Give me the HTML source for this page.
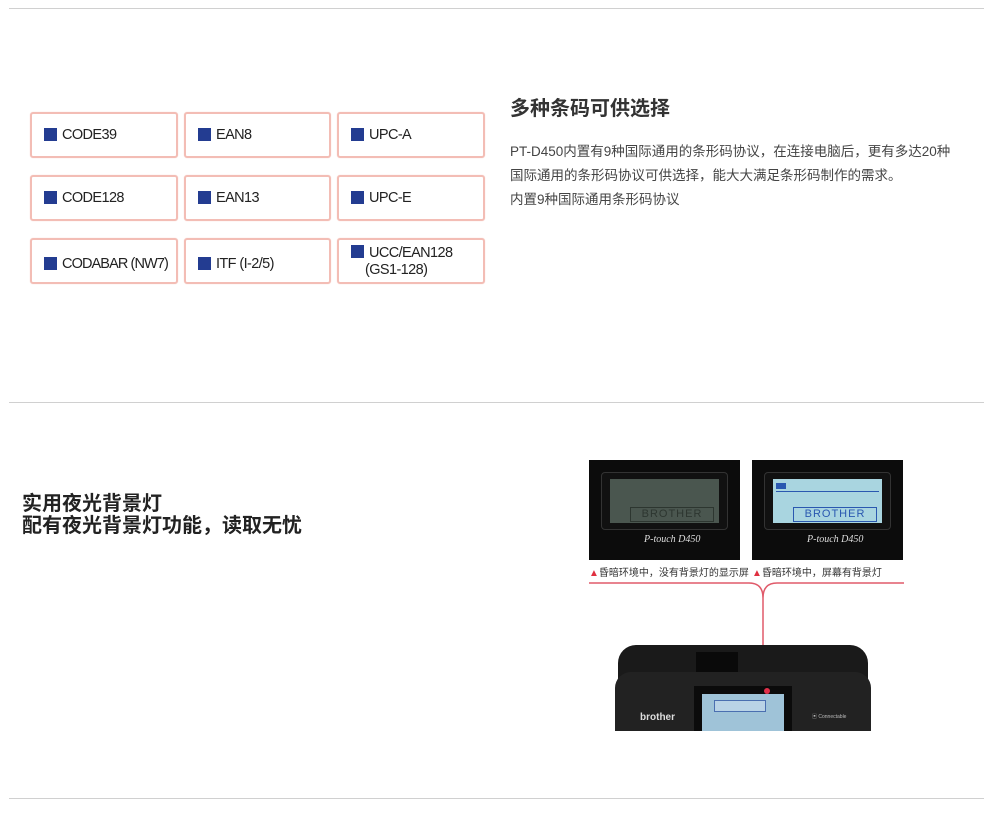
<!DOCTYPE html>
<html><head><meta charset="utf-8"><style>
body{margin:0;width:997px;height:837px;background:#fff;position:relative;font-family:"Liberation Sans","Noto Sans CJK SC",sans-serif;overflow:hidden}
.hr{position:absolute;left:9px;width:975px;height:1px;background:#d0d0d0}
.b{position:absolute;border:2px solid #f3bdb5;border-radius:3px;box-sizing:border-box;font-size:14.5px;color:#222;box-shadow:0 0 1px #f7d0ca}
.b i{position:absolute;left:12px;top:14px;width:13px;height:13px;background:#233c91}
.b span{position:absolute;left:30px;top:13px;letter-spacing:-0.6px;line-height:17px;white-space:nowrap}
.t{position:absolute;color:#333;white-space:nowrap}
.scr{position:absolute;top:460px;width:151px;height:100px;background:#0c0c0c}
.scr .in{position:absolute;left:12px;top:12px;width:125px;height:56px;border:1px solid #333;border-radius:4px;background:#111}
.scr .lcd{position:absolute;left:8px;top:6px;width:109px;height:44px}
.scr .br{position:absolute;left:20px;top:28px;width:82px;height:13px;border:1px solid;font-size:11px;line-height:13px;text-align:center;letter-spacing:1px}
.scr .pt{position:absolute;left:55px;top:74px;color:#ddd;font-style:italic;font-size:10px;font-family:"Liberation Serif",serif}
</style></head><body>
<div class="hr" style="top:8px"></div>
<div class="hr" style="top:402px"></div>
<div class="hr" style="top:798px"></div>

<div class="b" style="left:30px;top:112px;width:148px;height:46px"><i></i><span>CODE39</span></div>
<div class="b" style="left:184px;top:112px;width:147px;height:46px"><i></i><span>EAN8</span></div>
<div class="b" style="left:337px;top:112px;width:148px;height:46px"><i></i><span>UPC-A</span></div>
<div class="b" style="left:30px;top:175px;width:148px;height:46px"><i></i><span>CODE128</span></div>
<div class="b" style="left:184px;top:175px;width:147px;height:46px"><i></i><span>EAN13</span></div>
<div class="b" style="left:337px;top:175px;width:148px;height:46px"><i></i><span>UPC-E</span></div>
<div class="b" style="left:30px;top:238px;width:148px;height:46px"><i style="top:17px"></i><span style="top:16px;letter-spacing:-0.9px">CODABAR (NW7)</span></div>
<div class="b" style="left:184px;top:238px;width:147px;height:46px"><i style="top:17px"></i><span style="top:16px">ITF (I-2/5)</span></div>
<div class="b" style="left:337px;top:238px;width:148px;height:46px"><i style="top:5px"></i><span style="top:5px">UCC/EAN128<br><span style="position:static;margin-left:-4px">(GS1-128)</span></span></div>

<div class="t" style="left:510px;top:96px;font-size:20px;font-weight:bold;line-height:26px">多种条码可供选择</div>
<div class="t" style="left:510px;top:140px;font-size:13.5px;line-height:24px;color:#444">PT-D450内置有9种国际通用的条形码协议，在连接电脑后，更有多达20种<br>国际通用的条形码协议可供选择，能大大满足条形码制作的需求。<br>内置9种国际通用条形码协议</div>

<div class="t" style="left:22px;top:493px;font-size:20px;font-weight:bold;line-height:22px;color:#222">实用夜光背景灯<br>配有夜光背景灯功能，读取无忧</div>

<div class="scr" style="left:589px"><div class="in"><div class="lcd" style="background:#4a564f"><div class="br" style="color:#2d3630;border-color:#2d3630">BROTHER</div></div></div><div class="pt">P-touch D450</div></div>
<div class="scr" style="left:752px"><div class="in"><div class="lcd" style="background:#a9d5e0"><div style="position:absolute;left:3px;top:4px;width:10px;height:6px;background:#2a58b0"></div><div style="position:absolute;left:3px;top:12px;width:103px;height:1px;background:#2a58b0"></div><div class="br" style="color:#2a58b0;border-color:#2a58b0">BROTHER</div></div></div><div class="pt">P-touch D450</div></div>
<div class="t" style="left:589px;top:567px;font-size:10px;color:#333;line-height:14px"><span style="color:#e03040">▲</span>昏暗环境中，没有背景灯的显示屏</div>
<div class="t" style="left:752px;top:567px;font-size:10px;color:#333;line-height:14px"><span style="color:#e03040">▲</span>昏暗环境中，屏幕有背景灯</div>
<svg style="position:absolute;left:589px;top:580px" width="315" height="115"><path d="M0 3H160Q174 3 174 18V110M315 3H188Q174 3 174 18" stroke="#e05a6a" stroke-width="1.5" fill="none"/><circle cx="174" cy="110" r="3" fill="#e0304a"/></svg>
<div style="position:absolute;left:618px;top:645px;width:250px;height:86px;background:#1a1a1a;border-radius:18px 18px 0 0"></div>
<div style="position:absolute;left:696px;top:652px;width:42px;height:22px;background:#0a0a0a"></div>
<div style="position:absolute;left:615px;top:672px;width:256px;height:59px;background:#222;border-radius:16px 16px 0 0"></div>
<div style="position:absolute;left:694px;top:686px;width:98px;height:45px;background:#0b0b0b"></div>
<div style="position:absolute;left:702px;top:694px;width:82px;height:37px;background:#9fc3d8"></div>
<div style="position:absolute;left:714px;top:700px;width:50px;height:10px;border:1px solid #4a6fb0;background:#b9d3e6"></div>
<div style="position:absolute;left:764px;top:688px;width:6px;height:6px;border-radius:50%;background:#e0304a"></div>
<div class="t" style="left:640px;top:712px;font-size:10px;color:#ddd;font-weight:bold">brother</div>
<div class="t" style="left:812px;top:713px;font-size:5px;color:#bbb">▣ Connectable</div>
</body></html>
